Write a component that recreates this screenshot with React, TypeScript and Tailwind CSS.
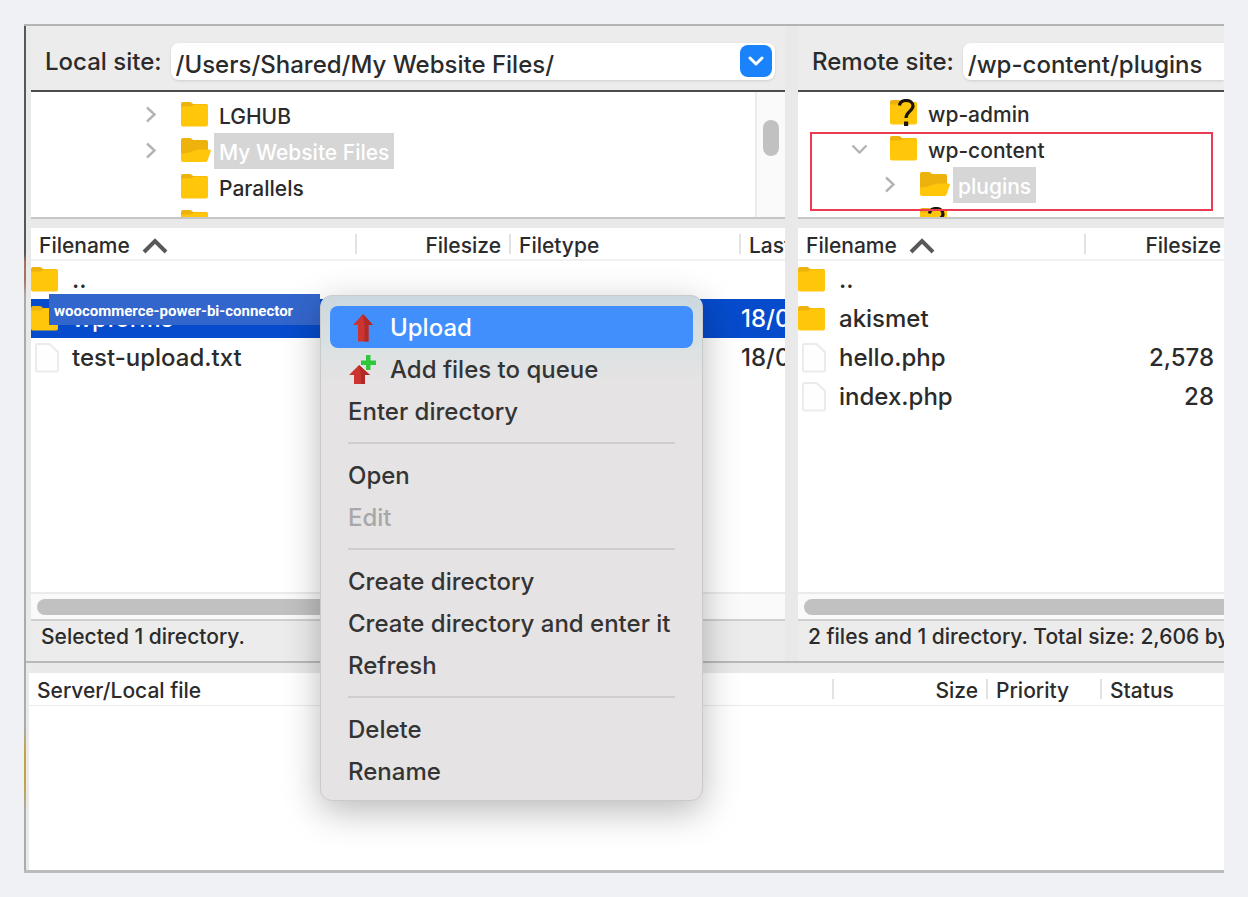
import React from "react";

type TreeItem = {
    name: string;
    open?: boolean;
    unknown?: boolean;
    arrow?: "right" | "down";
    nested?: boolean;
}

type FileItem = {
    name: string;
    folder?: boolean;
    size?: string;
    date?: string;
    selected?: boolean;
}

const localTree: TreeItem[] = [
    { name: "LGHUB", arrow: "right" },
    { name: "My Website Files", arrow: "right", open: true },
    { name: "Parallels" },
    { name: "" },
];

const remoteTree: TreeItem[] = [
    { name: "wp-admin", unknown: true },
    { name: "wp-content", arrow: "down" },
    { name: "plugins", arrow: "right", open: true, nested: true },
    { name: "", unknown: true, nested: true },
];

const localFiles: FileItem[] = [
    { name: "..", folder: true },
    { name: "wpforms", folder: true, date: "18/0", selected: true },
    { name: "test-upload.txt", date: "18/0" },
];

const remoteFiles: FileItem[] = [
    { name: "..", folder: true },
    { name: "akismet", folder: true },
    { name: "hello.php", size: "2,578" },
    { name: "index.php", size: "28" },
];

const menuGroups = [
    ["Upload", "Add files to queue", "Enter directory"],
    ["Open", "Edit"],
    ["Create directory", "Create directory and enter it", "Refresh"],
    ["Delete", "Rename"],
];

function FolderIcon({ open, unknown }: { open?: boolean, unknown?: boolean }) {
    return (
        <svg width="30" height="28" viewBox="0 0 30 28" className="shrink-0" aria-hidden="true">
            <path d="M0 3Q0 1 2 1H8.500Q10 1 11 2L12 3H25Q27 3 27 5V20H0Z" fill="#eeb20c" />
            {open ? (
                <path d="M0 16.500Q7 16.500 12 14Q15 12.500 19 12.500H28.500Q30.500 12.500 29.500 15L26.500 23.500Q26 25 24 25H2Q0 25 0 23Z" fill="#ffc60a" />
            ) : (
                <path d="M0 5.500H10L13 3.500H25.500Q27 3.500 27 5V23.500Q27 25.500 25 25.500H2Q0 25.500 0 23.500Z" fill="#ffc60a" />
            )}
            {unknown && (
                <g>
                    <path d="M9.500 6.500C10 2.500 12.500 1.500 16 1.500C20 1.500 23 3.500 23 7C23 12 16 12.500 16 19" fill="none" stroke="#1c1608" strokeWidth="3.200" />
                    <rect x="14" y="22.500" width="4.200" height="4.500" fill="#1c1608" />
                </g>
            )}
        </svg>
    );
}

function PageIcon() {
    return (
        <svg width="28" height="32" viewBox="0 0 28 32" className="shrink-0" aria-hidden="true">
            <path d="M5 3.500Q5 2 6.500 2H18.500L27 10V28Q27 29.500 25.500 29.500H6.500Q5 29.500 5 28Z" fill="#fefefe" stroke="#ebebeb" strokeWidth="2" />
        </svg>
    );
}

function TreeArrow({ dir }: { dir?: "right" | "down" }) {
    return (
        <svg width="20" height="20" viewBox="0 0 20 20" className="shrink-0" fill="none" stroke="#b4b4b4" strokeWidth="2.400" aria-hidden="true">
            {dir === "right" && <path d="M6 2.500L13.500 9.500L6 16.500" />}
            {dir === "down" && <path d="M2.500 6.500L9.500 13.500L16.500 6.500" />}
        </svg>
    );
}

function SortArrow() {
    return (
        <svg width="26" height="18" viewBox="0 0 26 18" fill="none" stroke="#595959" strokeWidth="4" aria-hidden="true">
            <path d="M2 15L13 4L24 15" />
        </svg>
    );
}

function UploadIcon() {
    return (
        <svg width="28" height="30" viewBox="0 0 28 30" aria-hidden="true">
            <path d="M15 1L25 12H20.500V28.500H10V12H5Z" fill="#cb3430" />
            <path d="M15 1L25 12H20.500V28.500H16.500V12Z" fill="#b02a27" />
        </svg>
    );
}

function QueueIcon() {
    return (
        <svg width="28" height="30" viewBox="0 0 28 30" aria-hidden="true">
            <path d="M11 10L22 20H17V29H6V20H1Z" fill="#cb3430" />
            <path d="M11 10L22 20H17V29H13V20Z" fill="#b02a27" />
            <path d="M18 0H22.500V5.500H28V10H22.500V15H18V10H13V5.500H18Z" fill="#2fc73c" />
        </svg>
    );
}

function Tree({ items, indent }: { items: TreeItem[], indent: string }) {
    return (
        <ul className={`min-w-0 flex-1 ${indent}`}>
            {items.map((item, i) => (
                <li key={i} className={`flex h-9 items-center ${item.nested ? "pl-[30px]" : ""}`}>
                    <TreeArrow dir={item.arrow} />
                    <span className="ml-5 flex">
                        <FolderIcon open={item.open} unknown={item.unknown} />
                    </span>
                    {item.name && (
                        <span className={`ml-[3px] flex h-9 items-center px-[5px] pt-[3px] text-[21px] font-medium whitespace-nowrap ${item.open ? "bg-[#d6d6d6] text-white" : "text-[#2b2b2b]"}`}>
                            {item.name}
                        </span>
                    )}
                </li>
            ))}
        </ul>
    );
}

function HeadCell({ children, align = "left", last }: { children: React.ReactNode, align?: "left" | "right", last?: boolean }) {
    return (
        <th scope="col" className="h-8 overflow-hidden p-0 font-medium">
            <div className={`flex h-5 items-center gap-3 px-2 pt-1 leading-6 whitespace-nowrap ${align === "right" ? "justify-end" : ""} ${last ? "" : "border-r-2 border-[#e2e2e2]"}`}>
                {children}
            </div>
        </th>
    );
}

function NameCell({ file }: { file: FileItem }) {
    return (
        <td className="p-0">
            <div className="flex items-center gap-[11px]">
                {file.folder ? <span className="flex"><FolderIcon /></span> : <span className="flex pr-[2px]"><PageIcon /></span>}
                {file.name}
            </div>
        </td>
    );
}

export default function App() {
    return (
        <div className="flex min-h-screen bg-[#eff1f5] p-6 font-['Inter','Liberation_Sans',sans-serif] text-[#2b2b2b]">
            <main className="relative flex min-w-0 flex-1 flex-col overflow-hidden border-t-2 border-b-3 border-t-[#b3b4b5] border-b-[#b9bbbc] bg-[#e9e9e9]">
                <div className="flex min-h-0 flex-1">
                    {/* sliver of the desktop behind the window */}
                    <div className="w-[2px] shrink-0 bg-[linear-gradient(to_bottom,#55575a_0%,#55575a_27%,#a5745f_28%,#a5745f_30%,#a9abad_32%,#a9abad_83%,#c0a548_86%,#c0a548_90%,#a9abad_93%)]" />
                    <div className="flex min-w-0 flex-1 flex-col">
                        <div className="grid flex-1 grid-cols-[754fr_426fr] gap-x-[13px] pl-[5px]">
                            <section className="flex min-w-0 flex-col bg-[#ececec]">
                                <div className="flex items-center gap-[9px] pt-4 pr-[10px] pb-[10px] pl-[14px]">
                                    <label htmlFor="local-site" className="pt-[2px] text-2xl leading-9 font-medium whitespace-nowrap">Local site:</label>
                                    <div className="flex h-[37px] min-w-0 flex-1 items-center rounded-lg bg-white pr-[3px] shadow-sm">
                                        <input id="local-site" type="text" defaultValue="/Users/Shared/My Website Files/" className="h-full min-w-0 flex-1 bg-transparent pt-[6px] pl-[5px] text-2xl font-medium outline-none" />
                                        <button type="button" aria-label="Show local sites" className="flex size-8 items-center justify-center rounded-lg bg-[#1a82fb]">
                                            <svg width="18" height="12" viewBox="0 0 18 12" fill="none" stroke="white" strokeWidth="3" strokeLinecap="round" strokeLinejoin="round" aria-hidden="true">
                                                <path d="M3 3L9 9L15 3" />
                                            </svg>
                                        </button>
                                    </div>
                                </div>
                                <div className="flex h-[129px] overflow-hidden border-t-2 border-b-2 border-t-[#4c4c4c] border-b-[#c6c6c6] bg-white">
                                    <Tree items={localTree} indent="pt-[5px] pl-[110px]" />
                                    <div className="w-[30px] border-l-2 border-[#ececec] bg-[#fafafa] pt-7 pl-[6px]">
                                        <div className="h-9 w-4 rounded-full bg-[#c1c1c1]" />
                                    </div>
                                </div>
                                <div className="h-[9px] shrink-0 bg-[#e9e9e9]" />
                                <div className="flex-1 overflow-hidden bg-white">
                                    <table className="w-full table-fixed border-collapse text-left">
                                        <colgroup>
                                            <col />
                                            <col className="w-[154px]" />
                                            <col className="w-[230px]" />
                                            <col className="w-[44px]" />
                                        </colgroup>
                                        <thead className="border-b-2 border-[#f1f1f1] text-[21px]">
                                            <tr>
                                                <HeadCell>Filename <SortArrow /></HeadCell>
                                                <HeadCell align="right">Filesize</HeadCell>
                                                <HeadCell>Filetype</HeadCell>
                                                <HeadCell last>Last</HeadCell>
                                            </tr>
                                        </thead>
                                        <tbody className="text-2xl leading-8 font-medium">
                                            {localFiles.map((file) => (
                                                <tr key={file.name} className={`h-[39px] ${file.selected ? "bg-[#064bcb] text-white" : ""}`}>
                                                    <NameCell file={file} />
                                                    <td></td>
                                                    <td></td>
                                                    <td className="overflow-hidden p-0 whitespace-nowrap">{file.date}</td>
                                                </tr>
                                            ))}
                                        </tbody>
                                    </table>
                                </div>
                                <div className="h-[29px] border-t-2 border-b-2 border-t-[#ebebeb] border-b-[#cfcfcf] bg-[#fafafa] px-[6px] pt-[5px]">
                                    <div className="h-4 w-3/5 rounded-full bg-[#c1c1c1]" />
                                </div>
                                <p className="h-10 overflow-hidden pl-[10px] text-[21px] leading-8 font-medium whitespace-nowrap">Selected 1 directory.</p>
                            </section>

                            <section className="flex min-w-0 flex-col overflow-hidden bg-[#ececec]">
                                <div className="flex items-center gap-[9px] pt-4 pb-[10px] pl-[14px]">
                                    <label htmlFor="remote-site" className="pt-[2px] text-2xl leading-9 font-medium whitespace-nowrap">Remote site:</label>
                                    <input id="remote-site" type="text" defaultValue="/wp-content/plugins" className="h-[37px] min-w-0 flex-1 rounded-l-lg bg-white pt-[6px] pl-[5px] text-2xl font-medium shadow-sm outline-none" />
                                </div>
                                <div className="relative flex h-[129px] overflow-hidden border-t-2 border-b-2 border-t-[#4c4c4c] border-b-[#c6c6c6] bg-white">
                                    <Tree items={remoteTree} indent="pt-[3px] pl-[52px]" />
                                    <div className="absolute top-10 right-[11px] left-3 h-[79px] border-2 border-[#ec3a50]" />
                                </div>
                                <div className="h-[9px] shrink-0 bg-[#e9e9e9]" />
                                <div className="flex-1 overflow-hidden bg-white">
                                    <table className="w-full table-fixed border-collapse text-left">
                                        <colgroup>
                                            <col />
                                            <col className="w-[138px]" />
                                        </colgroup>
                                        <thead className="border-b-2 border-[#f1f1f1] text-[21px]">
                                            <tr>
                                                <HeadCell>Filename <SortArrow /></HeadCell>
                                                <th scope="col" className="pt-1 pr-[3px] pb-0 text-right leading-6 font-medium">Filesize</th>
                                            </tr>
                                        </thead>
                                        <tbody className="text-2xl leading-8 font-medium">
                                            {remoteFiles.map((file) => (
                                                <tr key={file.name} className="h-[39px]">
                                                    <NameCell file={file} />
                                                    <td className="py-0 pr-[10px] text-right">{file.size}</td>
                                                </tr>
                                            ))}
                                        </tbody>
                                    </table>
                                </div>
                                <div className="h-[29px] border-t-2 border-b-2 border-t-[#ebebeb] border-b-[#cfcfcf] bg-[#fafafa] pt-[5px] pl-[6px]">
                                    <div className="h-4 rounded-l-full bg-[#c1c1c1]" />
                                </div>
                                <p className="h-10 overflow-hidden pl-[10px] text-[21px] leading-8 font-medium whitespace-nowrap">2 files and 1 directory. Total size: 2,606 by</p>
                            </section>
                        </div>

                        <div className="h-3 border-t-2 border-[#b9b9b9]" />

                        <section className="ml-[3px] h-[197px] bg-white">
                            <table className="w-full table-fixed border-collapse text-left">
                                <colgroup>
                                    <col />
                                    <col className="w-[154px]" />
                                    <col className="w-[114px]" />
                                    <col className="w-[122px]" />
                                </colgroup>
                                <thead className="border-b border-[#ebebeb] text-[21px]">
                                    <tr>
                                        <HeadCell>Server/Local file</HeadCell>
                                        <HeadCell align="right">Size</HeadCell>
                                        <HeadCell>Priority</HeadCell>
                                        <HeadCell last>Status</HeadCell>
                                    </tr>
                                </thead>
                            </table>
                        </section>
                    </div>
                </div>

                <div className="absolute top-[268px] left-[25px] h-[31px] w-[271px] bg-[#3366cc] pl-[5px] font-['Roboto','Liberation_Sans',sans-serif] text-[15px] leading-[34px] font-bold whitespace-nowrap text-white">
                    woocommerce-power-bi-connector
                </div>

                <div role="menu" className="absolute top-[269px] left-[296px] w-[383px] rounded-xl border border-[#c9cbcb] bg-[#e5e3e4] bg-[linear-gradient(to_bottom,#cbd8df_0px,#dbe1e2_50px,#e5e3e4_85px)] px-[9px] pt-[10px] pb-2 shadow-[0_10px_36px_rgba(0,0,0,0.28)]">
                    {menuGroups.map((group, i) => (
                        <div key={i}>
                            {i > 0 && (
                                <div className="flex h-[22px] items-center px-[18px]">
                                    <hr className="w-full border-t-2 border-[#cfcdce]" />
                                </div>
                            )}
                            {group.map((label) => (
                                <button
                                    key={label}
                                    type="button"
                                    role="menuitem"
                                    disabled={label === "Edit"}
                                    className={`flex h-[42px] w-full items-center gap-[14px] rounded-lg px-[18px] pt-[2px] text-left text-2xl font-medium whitespace-nowrap disabled:text-[#a9a7a8] ${label === "Upload" ? "bg-[#418efd] text-white" : "text-[#343434]"}`}
                                >
                                    {label === "Upload" && <UploadIcon />}
                                    {label === "Add files to queue" && <QueueIcon />}
                                    {label}
                                </button>
                            ))}
                        </div>
                    ))}
                </div>
            </main>
        </div>
    );
}
